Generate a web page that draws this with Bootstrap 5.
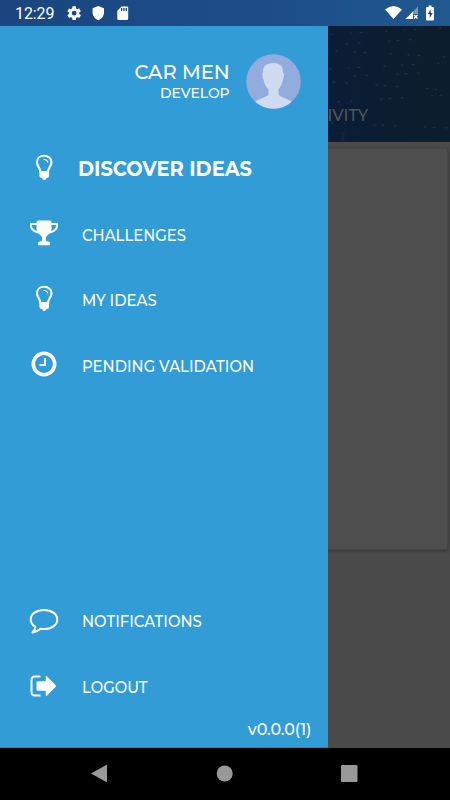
<!DOCTYPE html>
<html lang="en">
<head>
<meta charset="utf-8">
<meta name="viewport" content="width=device-width, initial-scale=1">
<title>Ideas</title>
<link href="https://cdn.jsdelivr.net/npm/bootstrap@5.3.0/dist/css/bootstrap.min.css" rel="stylesheet">
<style>
  body { font-family: "Montserrat", Inter, "Liberation Sans", sans-serif; background: #000; }
  .phone { width: 450px; height: 800px; background: #000; }
  .status-bar { height: 26px; background: linear-gradient(90deg, #1b467f, #1d4d88 60%, #20598f); font: 500 16px/26px Roboto, sans-serif; padding: 0 15px; }
  .status-bar .clock { width: 40px; font-weight: 400; letter-spacing: -.1px; padding-top: 2px; }
  .stage { height: 722px; background: #4b4b4b; }
  .hero { height: 116px; background: linear-gradient(90deg, #0b1d38 70%, #0c1d30 88%, #0c1e2d); }
  .hero-tab { color: #50565d; font-size: 17px; font-weight: 500; line-height: 20px; margin: 0 82px 0 0; padding-top: 79px; transform: scaleX(.94); transform-origin: right; }
  .sheet { height: 402px; margin: 6px 2px 0 4px; background: #4e4e4e; border: 1px solid #464646; border-radius: 2px; box-shadow: 0 1px 3px #333; }
  .drawer { width: 328.300px; background: #329cd7; border-bottom: 1px solid #2786bd; }
  .profile { height: 110px; padding: 0 27.500px 0 0; }
  .user-name, .user-org { transform-origin: right; font-weight: 500; }
  .user-name { font-size: 20.500px; line-height: 24px; transform: scaleX(.955); }
  .user-org { font-size: 15.500px; line-height: 18px; transform: scaleX(.9); }
  .entry { height: 65.600px; color: #fff; text-decoration: none; font-size: 16px; font-weight: 500; padding-left: 23px; }
  .entry:hover { color: #fff; }
  .entry span { padding-top: 3px; transform: scaleX(.93); transform-origin: left; }
  .entry .glyph { width: 42px; height: 32px; margin-right: 17px; margin-bottom: 3px; flex: none; }
  .entry.current { font-size: 21px; font-weight: 700; }
  .entry.current span { padding-top: 0; padding-bottom: 1px; transform: scaleX(.925); }
  .entry.current .glyph { margin-right: 13px; margin-bottom: 4px; }
  .lower-menu .glyph { margin-bottom: 0; }
  .version { font-size: 16px; line-height: 20px; font-weight: 500; letter-spacing: -.1px; padding: 0 17px 7px 0; }
  .lower-menu { margin-bottom: 1px; }
  .nav-keys { height: 52px; }
</style>
<script src="https://cdn.jsdelivr.net/npm/bootstrap@5.3.0/dist/js/bootstrap.bundle.min.js"></script>
</head>
<body>
<svg width="0" height="0" class="position-absolute" aria-hidden="true">
  <symbol id="bulb" viewBox="0 0 42 32">
    <path d="M17.300 20.500C17.300 17 14 15.500 14 11.200C14 7.200 17.200 4.700 21.200 4.700S28.500 7.200 28.500 11.200C28.500 15.500 25 17 25 20.500" fill="none" stroke="#fff" stroke-width="2.100"/>
    <path d="M20.500 8.500C23 8.300 24.700 9.400 24.800 11.500" fill="none" stroke="#fff" stroke-width="1.200"/>
    <path d="M16.200 20H26.200V22L25.700 23L26.200 24L25.500 26.500L23.500 27L22.500 28.700H20L19 27L17 26.500L16.200 24L16.700 23L16.200 22Z" fill="#fff"/>
  </symbol>
</svg>
<div class="phone d-flex flex-column overflow-hidden position-relative">
  <header class="status-bar d-flex align-items-center text-white">
    <span class="clock">12:29</span>
    <svg class="ms-2" width="80" height="26" viewBox="0 0 80 26" fill="#fff">
      <g transform="translate(3 5) scale(.68)"><path fill-rule="evenodd" d="M19.400 13a7.800 7.800 0 0 0 0-2l2.100-1.600c.2-.2.3-.4.1-.7l-2-3.400c-.1-.2-.4-.3-.6-.2l-2.500 1a7.300 7.300 0 0 0-1.700-1L14.500 2.400c0-.2-.3-.4-.5-.4h-4c-.3 0-.5.200-.5.400L9.100 5.100c-.6.200-1.200.600-1.700 1l-2.500-1c-.2-.1-.5 0-.6.200l-2 3.400c-.1.300-.1.500.1.700L4.600 11a7.800 7.800 0 0 0 0 2l-2.200 1.600c-.2.200-.2.400-.1.700l2 3.400c.1.200.4.300.6.200l2.500-1c.5.400 1.100.7 1.700 1l.4 2.700c0 .2.200.4.500.4h4c.2 0 .5-.2.500-.4l.4-2.700c.6-.3 1.200-.6 1.700-1l2.500 1c.2.1.5 0 .6-.2l2-3.400c.2-.3.100-.5-.1-.7zM12 8.500a3.500 3.500 0 1 1 0 7a3.500 3.500 0 1 1 0-7z"/></g>
      <path d="M35.300 6l5.700 2.300v4.200c0 3.400-2.400 6.500-5.700 7.700c-3.300-1.200-5.700-4.300-5.700-7.700V8.300z"/>
      <path fill-rule="evenodd" d="M58.500 6.500h5.500q1.200 0 1.200 1.200v11q0 1.200-1.200 1.200h-8.500q-1.200 0-1.200-1.200v-8zM58 8v3h1.300V8zm2.300 0v3h1.300V8zm2.300 0v3H64V8z"/>
    </svg>
    <svg class="ms-auto" width="54" height="26" viewBox="0 0 54 26" fill="#fff">
      <path d="M4 9.500Q12.500 2.500 21 9.500L12.500 19z"/>
      <path d="M37 6.500V19H24.500z" opacity=".38"/><path d="M32 11.500V19H24.500z"/>
      <path d="M32 14h5v5h-5z" fill="#20538c"/><path d="M33 15l3.500 3.500m0-3.500l-3.500 3.500" stroke="#fff" stroke-width="1.400"/>
      <path d="M47.500 5.500h3V7H52q1 0 1 1v11.500q0 1-1 1h-6q-1 0-1-1V8q0-1 1-1h1.500z"/>
      <path d="M49.700 9.500l-3 4.500h2v4l3-5h-2z" fill="#1a407d"/>
    </svg>
  </header>

  <main class="stage position-relative">
    <section class="hero position-relative text-end">
      <svg class="position-absolute top-0 end-0" width="122" height="116" fill="none" stroke="#25415b" stroke-width="1.300" stroke-linecap="round" opacity=".6"><path stroke-dasharray="1 17 1 9 2 24" d="M4 8L118 2M8 25L120 31M2 43L114 37"/><path stroke-dasharray="2 11 1 29 1 7" d="M5 56L119 64M10 76L115 69M3 97L120 102M18 18L110 12M26 50L116 46"/><path opacity=".4" stroke-width="3" d="M15 107v7"/></svg>
      <div class="hero-tab">ACTIVITY</div>
    </section>
    <section class="sheet"></section>

    <aside class="drawer position-absolute top-0 start-0 h-100 d-flex flex-column text-white">
      <div class="profile d-flex align-items-center justify-content-end">
        <div class="text-end me-3"><div class="user-name">CAR MEN</div><div class="user-org">DEVELOP</div></div>
        <svg width="55" height="55" viewBox="0 0 55 55">
          <defs><clipPath id="round"><circle cx="27.500" cy="27.500" r="27.300"/></clipPath></defs>
          <g clip-path="url(#round)"><path fill="#91acdd" d="M0 0h55v55H0z"/><path fill="#cfdbf1" d="M27 9C33 8.500 37.500 12 37 19C38.500 19 38.300 22 37 25.500C36.500 29 34.500 33 32.500 35.500V40.500C35.500 44 42 44.500 47 48.500V55H8V48.500C13 44.500 19.500 44 22.500 40.500V35.500C20 33 18 29 17.500 25.500C16 22 16 19 17 19C16.500 12 20 9.500 27 9Z"/></g>
        </svg>
      </div>
      <nav class="d-flex flex-column">
        <a class="entry current d-flex align-items-center" href="#"><svg class="glyph"><use href="#bulb"/></svg><span>DISCOVER IDEAS</span></a>
        <a class="entry d-flex align-items-center" href="#">
          <svg class="glyph" viewBox="0 0 42 32"><path fill="#fff" d="M13.500 5.200Q13.500 3.500 15.200 3.500H26.800Q28.500 3.500 28.500 5.200V12C28.500 15 26 17 23.800 19C22.300 20.500 22.500 24 24 24.200C26 24.500 27 25 27 26.500V28.300H15V26.500C15 25 16 24.500 18 24.200C19.500 24 19.700 20.500 18.200 19C16 17 13.500 15 13.500 12Z"/><path fill="none" stroke="#fff" stroke-width="1.900" d="M15 7H8V9C8 12.500 12.500 15.500 18 15.700M27 7H34V9C34 12.500 29.500 15.500 24 15.700"/></svg>
          <span>CHALLENGES</span></a>
        <a class="entry d-flex align-items-center" href="#"><svg class="glyph"><use href="#bulb"/></svg><span>MY IDEAS</span></a>
        <a class="entry d-flex align-items-center" href="#">
          <svg class="glyph" viewBox="0 0 42 32" fill="none" stroke="#fff"><circle cx="21" cy="16" r="10.700" stroke-width="3.600"/><path d="M22 10v7h-5.500" stroke-width="2"/></svg>
          <span>PENDING VALIDATION</span></a>
      </nav>
      <nav class="lower-menu d-flex flex-column mt-auto">
        <a class="entry d-flex align-items-center" href="#">
          <svg class="glyph" viewBox="0 0 42 32"><path fill="none" stroke="#fff" stroke-width="2" stroke-linejoin="round" d="M21 5C28.500 5 34.300 9 34.300 14.500S28.500 24 21 24Q19 24 17.500 23.700C15.500 25.600 13 27 9.500 27.500Q12 25 12.300 21.800C9.500 20 7.700 17.500 7.700 14.500C7.700 9 13.500 5 21 5Z"/></svg>
          <span>NOTIFICATIONS</span></a>
        <a class="entry d-flex align-items-center" href="#">
          <svg class="glyph" viewBox="0 0 42 32"><path fill="none" stroke="#fff" stroke-width="2" d="M17.500 6.500H12Q8.500 6.500 8.500 10V22Q8.500 25.500 12 25.500H17.500"/><path fill="#fff" d="M14.500 11.300H22.700V7.300Q22.700 5.300 24.300 6.700L32.800 15.300Q33.400 16 32.800 16.700L24.300 25.300Q22.700 26.700 22.700 24.700V20.700H14.500Q13.500 20.700 13.500 19.700V12.300Q13.500 11.300 14.500 11.300Z"/></svg>
          <span>LOGOUT</span></a>
      </nav>
      <div class="version text-end">v0.0.0(1)</div>
    </aside>
  </main>

  <footer class="nav-keys">
    <svg class="d-block" width="450" height="52" fill="#999"><path d="M91 25.500L107 16.500V34.500z"/><circle cx="224.700" cy="25.500" r="8"/><rect x="341" y="17" width="16.500" height="17" rx="1"/></svg>
  </footer>
</div>
</body>
</html>
